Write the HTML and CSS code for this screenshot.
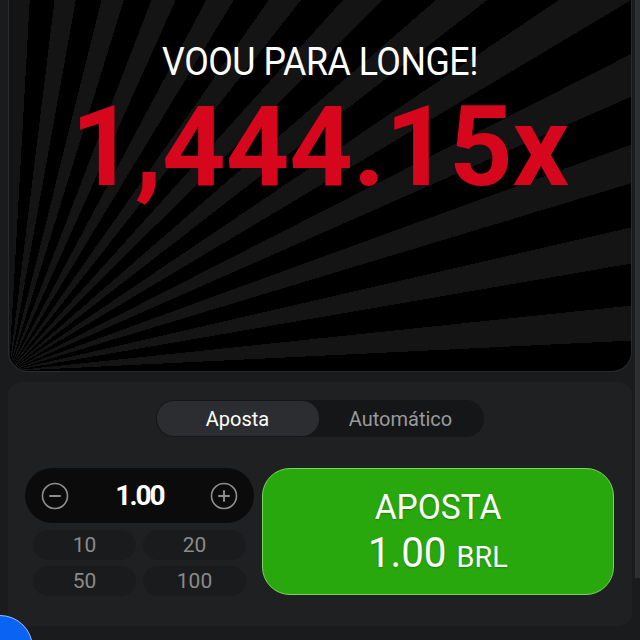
FILE: index.html
```html
<!DOCTYPE html>
<html lang="pt">

<head>
    <meta charset="UTF-8">
    <meta name="viewport" content="width=device-width, initial-scale=1.0">
    <title>Aposta</title>

    <link rel="stylesheet" href="styles.css">
</head>

<body>
    <div class="screen">
        <section class="game">
            <h1 class="flew-title">VOOU PARA LONGE!</h1>
            <div class="multiplier">1,444.15x</div>
        </section>

        <section class="bet-panel">
            <div class="tabs">
                <button class="tab active" type="button">Aposta</button>
                <button class="tab" type="button">Automático</button>
            </div>

            <div class="bet-row">
                <div class="amount-col">
                    <div class="amount-input">
                        <button class="round-btn" type="button">
                            <svg width="28" height="28" viewBox="0 0 28 28">
                                <circle cx="14" cy="14" r="12.5" fill="none" stroke="#8e8e8e" stroke-width="1.6"/>
                                <path d="M9 14h10" stroke="#8e8e8e" stroke-width="2" stroke-linecap="round"/>
                            </svg>
                        </button>
                        <span class="amount-value">1.00</span>
                        <button class="round-btn" type="button">
                            <svg width="28" height="28" viewBox="0 0 28 28">
                                <circle cx="14" cy="14" r="12.5" fill="none" stroke="#8e8e8e" stroke-width="1.6"/>
                                <path d="M9 14h10M14 9v10" stroke="#8e8e8e" stroke-width="2" stroke-linecap="round"/>
                            </svg>
                        </button>
                    </div>
                    <div class="quick-grid">
                        <button class="quick-btn" type="button">10</button>
                        <button class="quick-btn" type="button">20</button>
                        <button class="quick-btn" type="button">50</button>
                        <button class="quick-btn" type="button">100</button>
                    </div>
                </div>

                <button class="bet-btn" type="button">
                    <span class="bet-label">APOSTA</span>
                    <span class="bet-amount">1.00 <small>BRL</small></span>
                </button>
            </div>
        </section>

        <div class="scroll-thumb"></div>
        <div class="chat-bubble"></div>
    </div>
</body>

</html>
```

FILE: styles.css
```css
* {
    padding: 0;
    margin: 0;
    box-sizing: border-box;
}

body {
    font-family: Roboto, "Liberation Sans", Arial, sans-serif;
    background-color: #1a1b1d;
    width: 640px;
    height: 640px;
    overflow: hidden;
}

button {
    border: none;
    background: none;
    font-family: inherit;
    color: inherit;
}

.screen {
    position: relative;
    height: 640px;
    padding: 0 8px;
    display: flex;
    flex-direction: column;
    gap: 10px;
    overflow: hidden;
}

/* game area with the sunburst */
.game {
    flex: none;
    height: 392px;
    margin-top: -20px;
    padding-top: 62px;
    border: 1px solid #2a2b2d;
    border-top: none;
    border-radius: 0 0 20px 20px;
    background-color: #000;
    background-image: repeating-conic-gradient(from 0deg at 0% 100%, #141414 0deg 3.2deg, #000 3.2deg 7deg);
    text-align: center;
    overflow: hidden;
}

.flew-title {
    font-weight: 400;
    font-size: 38px;
    color: #fff;
    letter-spacing: -0.5px;
    transform: scaleX(0.94);
    line-height: 40px;
}

.multiplier {
    font-weight: 700;
    font-size: 111px;
    color: #d6061c;
    line-height: 110px;
    margin-top: 10px;
}

/* bet panel */
.bet-panel {
    flex: none;
    height: 244px;
    background-color: #1f2022;
    border-radius: 14px;
    padding: 18px 18px 0 17px;
}

.tabs {
    width: 328px;
    height: 37px;
    margin: 0 auto;
    padding: 1px;
    display: grid;
    grid-template-columns: 162px 1fr;
    background-color: #151618;
    border-radius: 18px;
}

.tab {
    font-size: 20px;
    color: #9a9a9a;
    border-radius: 17px;
}

.tab.active {
    background-color: #2c2d30;
    color: #fff;
}

.bet-row {
    margin-top: 31px;
    display: flex;
    gap: 8px;
}

.amount-col {
    width: 229px;
}

.amount-input {
    height: 55px;
    background-color: #0b0b0b;
    border-radius: 28px;
    padding: 0 16px;
    display: flex;
    align-items: center;
    justify-content: space-between;
}

.round-btn {
    display: flex;
}

.amount-value {
    font-size: 28px;
    font-weight: 700;
    color: #fff;
    letter-spacing: -2px;
}

.quick-grid {
    margin: 7px 8px 0;
    display: grid;
    grid-template-columns: 1fr 1fr;
    gap: 6px 7px;
}

.quick-btn {
    height: 30px;
    border-radius: 15px;
    background-color: #1a1b1c;
    color: #8a8a8a;
    font-size: 21px;
}

.bet-btn {
    flex: 1;
    height: 127px;
    padding-top: 18px;
    border-radius: 28px;
    background-color: #29a80e;
    border: 1.5px solid #7ad35e;
    color: #fff;
    display: flex;
    flex-direction: column;
    align-items: center;
    justify-content: flex-start;
    text-shadow: 0 1px 2px rgba(0, 0, 0, 0.25);
}

.bet-label {
    font-size: 35px;
    line-height: 41px;
    transform: scaleX(0.96);
}

.bet-amount {
    font-size: 42px;
    line-height: 50px;
    transform: scaleX(0.96);
}

.bet-amount small {
    font-size: 30px;
}

/* overlays */
.scroll-thumb {
    position: absolute;
    top: 0;
    right: 0;
    width: 5px;
    height: 578px;
    background-color: #2e2f31;
}

.chat-bubble {
    position: absolute;
    left: -33px;
    top: 615px;
    width: 66px;
    height: 66px;
    border-radius: 50%;
    background-color: #0a63f2;
    border: 1.5px solid #9bbcff;
}
```
